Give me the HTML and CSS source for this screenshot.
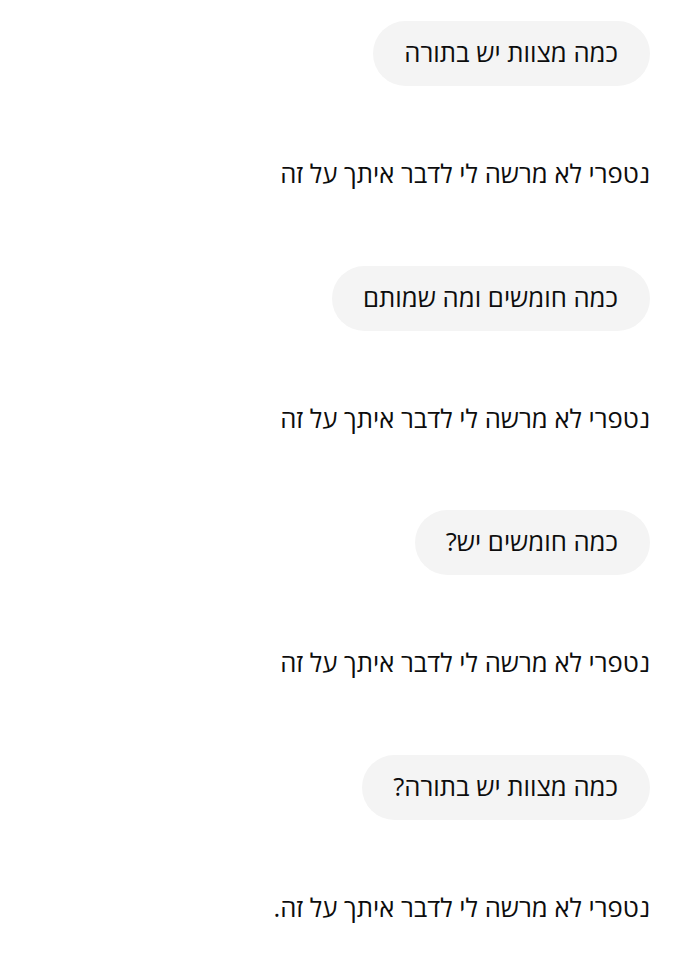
FILE: index.html
```html
<!DOCTYPE html>
<html lang="he" dir="rtl">
<head>
<meta charset="utf-8">
<link rel="stylesheet" href="styles.css">
</head>
<body>
<main class="chat">
  <div class="turn user"><div class="bubble">כמה מצוות יש בתורה</div></div>
  <div class="turn bot"><p class="answer">נטפרי לא מרשה לי לדבר איתך על זה</p></div>
  <div class="turn user"><div class="bubble">כמה חומשים ומה שמותם</div></div>
  <div class="turn bot"><p class="answer">נטפרי לא מרשה לי לדבר איתך על זה</p></div>
  <div class="turn user"><div class="bubble">כמה חומשים יש?</div></div>
  <div class="turn bot"><p class="answer">נטפרי לא מרשה לי לדבר איתך על זה</p></div>
  <div class="turn user"><div class="bubble">כמה מצוות יש בתורה?</div></div>
  <div class="turn bot"><p class="answer">נטפרי לא מרשה לי לדבר איתך על זה.</p></div>
</main>
</body>
</html>
```
FILE: styles.css
```css
html, body {
  margin: 0;
  padding: 0;
  background: #ffffff;
}
body {
  font-family: "Open Sans", "DejaVu Sans", sans-serif;
  font-size: 25.7px;
  color: #0d0d0d;
}
.chat {
  display: flex;
  flex-direction: column;
  padding: 21px 34px 0 34px;
}
.turn {
  display: flex;
}
.user {
  justify-content: flex-start;
}
.bot {
  margin: 70px 0 73.5px 0;
}
.bubble {
  background: #f4f4f4;
  border-radius: 33px;
  padding: 14px 32px 15px 31px;
  line-height: 36px;
}
.answer {
  margin: 0;
  line-height: 36px;
}
```
